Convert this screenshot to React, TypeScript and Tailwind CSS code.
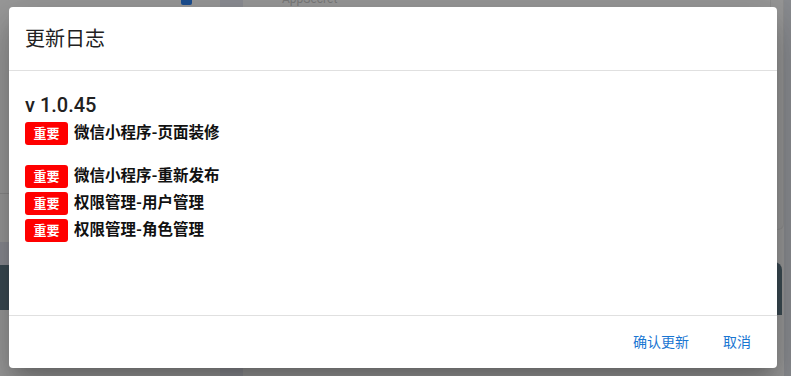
const font = "font-['Roboto','Noto_Sans_CJK_SC',sans-serif]";

const changes = [
  { label: "微信小程序-页面装修", gapAfter: true },
  { label: "微信小程序-重新发布" },
  { label: "权限管理-用户管理" },
  { label: "权限管理-角色管理" },
];

function Tag() {
  return (
    <span className="flex h-[23px] w-[43px] shrink-0 items-center justify-center rounded-[3px] bg-[#ff0000] text-[13px] font-bold text-white">
      重要
    </span>
  );
}

export default function App() {
  return (
    <div
      className={`relative h-[376px] w-[791px] overflow-hidden bg-[#9a9a9a] ${font}`}
    >
      {/* dimmed page underneath the dialog */}
      <div className="absolute left-[181px] top-[-4px] h-[9px] w-[11px] rounded-[2px] bg-[#1c4f92]" />
      <div className="absolute left-[220px] top-0 h-[376px] w-[23px] bg-[#8e8f95]" />
      <div className="absolute left-[282px] top-[-8px] text-[12px] leading-[14px] text-[#7a7a7a]">
        AppSecret
      </div>
      <div className="absolute left-0 top-[193px] flex w-[9px] flex-col">
        <div className="h-px bg-[#8a8a8a]" />
        <div className="mt-[48px] h-[23px] bg-[#8b8c93]" />
        <div className="h-[45px] bg-[#3a4a53]" />
      </div>
      <div className="absolute left-[770px] top-0 flex h-[376px] w-[21px]">
        <div className="flex w-[14px] flex-col">
          <div className="h-[230px] rounded-b-[6px] border border-t-0 border-[#8f8f8f] bg-[#989898]" />
          <div className="mt-[32px] h-[53px] w-[12px] rounded-tr-[8px] bg-[#3a4a53]" />
        </div>
        <div className="flex-1 bg-[#8a8c90]" />
      </div>

      <div className="relative px-[9px] pt-[7px]">
        <div className="flex h-[361px] w-[768px] flex-col rounded-[4px] bg-white shadow-[0_11px_15px_-7px_rgba(0,0,0,0.2),0_24px_38px_3px_rgba(0,0,0,0.14),0_9px_46px_8px_rgba(0,0,0,0.12)]">
          <div className="flex h-[64px] items-center border-b border-[#e0e0e0] px-[16px] text-[20px] text-[#212121]">
            更新日志
          </div>

          <div className="flex-1 px-[16px] pt-[21px]">
            <div className="text-[20px] font-medium leading-[26px] text-[#212121]">
              v 1.0.45
            </div>
            <div className="mt-[4px] flex flex-col gap-[3.5px]">
              {changes.map((c) => (
                <div
                  key={c.label}
                  className={`flex items-center gap-[6px] ${c.gapAfter ? "mb-[16.5px]" : ""}`}
                >
                  <Tag />
                  <span className="text-[15.5px] font-bold text-[#111]">
                    {c.label}
                  </span>
                </div>
              ))}
            </div>
          </div>

          <div className="flex h-[53px] items-center justify-end gap-[34px] border-t border-[#e0e0e0] pr-[26px] text-[14px] text-[#1976d2]">
            <span>确认更新</span>
            <span>取消</span>
          </div>
        </div>
      </div>
    </div>
  );
}
